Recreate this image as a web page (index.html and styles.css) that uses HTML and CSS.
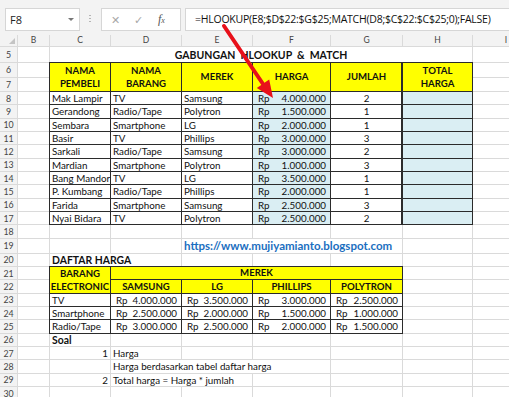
FILE: index.html
```html
<!DOCTYPE html>
<html lang="id">
<head>
    <meta charset="UTF-8">
    <title>Gabungan HLOOKUP &amp; MATCH</title>
    <link rel="stylesheet" href="styles.css">
</head>
<body>
<div class="app">

    <!-- formula bar -->
    <div class="formula-bar">
        <div class="name-box">F8<span class="caret"></span></div>
        <div class="grip"></div>
        <div class="fx-box">
            <span class="icon">&#x2715;</span>
            <span class="icon">&#x2713;</span>
            <span class="fx">f<small>x</small></span>
        </div>
        <div class="formula">=HLOOKUP(E8;$D$22:$G$25;MATCH(D8;$C$22:$C$25;0);FALSE)</div>
    </div>

    <!-- worksheet -->
    <div class="sheet">
        <div class="hd corner"></div><div class="hd">B</div><div class="hd">C</div><div class="hd">D</div><div class="hd">E</div><div class="hd">F</div><div class="hd">G</div><div class="hd">H</div><div class="hd">I</div>

        <div class="rn">5</div><div class="c"></div><div class="c title span6">GABUNGAN&nbsp; HLOOKUP&nbsp; &amp;&nbsp; MATCH</div><div class="c"></div>

        <div class="rn">6</div><div class="c"></div>
        <div class="c t y rows2">NAMA<br>PEMBELI</div>
        <div class="c t y rows2">NAMA<br>BARANG</div>
        <div class="c t y rows2">MEREK</div>
        <div class="c t y rows2">HARGA</div>
        <div class="c t y rows2">JUMLAH</div>
        <div class="c t y rows2 thick">TOTAL<br>HARGA</div>
        <div class="c"></div>
        <div class="rn">7</div><div class="c"></div><div class="c"></div>

        <div class="rn">8</div><div class="c"></div><div class="c t">Mak Lampir</div><div class="c t">TV</div><div class="c t">Samsung</div><div class="c t blue rp"><span>Rp</span><span>4.000.000</span></div><div class="c t mid">2</div><div class="c t blue thick"></div><div class="c"></div>
        <div class="rn">9</div><div class="c"></div><div class="c t">Gerandong</div><div class="c t">Radio/Tape</div><div class="c t">Polytron</div><div class="c t blue rp"><span>Rp</span><span>1.500.000</span></div><div class="c t mid">1</div><div class="c t blue thick"></div><div class="c"></div>
        <div class="rn">10</div><div class="c"></div><div class="c t">Sembara</div><div class="c t">Smartphone</div><div class="c t">LG</div><div class="c t blue rp"><span>Rp</span><span>2.000.000</span></div><div class="c t mid">1</div><div class="c t blue thick"></div><div class="c"></div>
        <div class="rn">11</div><div class="c"></div><div class="c t">Basir</div><div class="c t">TV</div><div class="c t">Phillips</div><div class="c t blue rp"><span>Rp</span><span>3.000.000</span></div><div class="c t mid">3</div><div class="c t blue thick"></div><div class="c"></div>
        <div class="rn">12</div><div class="c"></div><div class="c t">Sarkali</div><div class="c t">Radio/Tape</div><div class="c t">Samsung</div><div class="c t blue rp"><span>Rp</span><span>3.000.000</span></div><div class="c t mid">2</div><div class="c t blue thick"></div><div class="c"></div>
        <div class="rn">13</div><div class="c"></div><div class="c t">Mardian</div><div class="c t">Smartphone</div><div class="c t">Polytron</div><div class="c t blue rp"><span>Rp</span><span>1.000.000</span></div><div class="c t mid">3</div><div class="c t blue thick"></div><div class="c"></div>
        <div class="rn">14</div><div class="c"></div><div class="c t">Bang Mandor</div><div class="c t">TV</div><div class="c t">LG</div><div class="c t blue rp"><span>Rp</span><span>3.500.000</span></div><div class="c t mid">1</div><div class="c t blue thick"></div><div class="c"></div>
        <div class="rn">15</div><div class="c"></div><div class="c t">P. Kumbang</div><div class="c t">Radio/Tape</div><div class="c t">Phillips</div><div class="c t blue rp"><span>Rp</span><span>2.000.000</span></div><div class="c t mid">1</div><div class="c t blue thick"></div><div class="c"></div>
        <div class="rn">16</div><div class="c"></div><div class="c t">Farida</div><div class="c t">Smartphone</div><div class="c t">Samsung</div><div class="c t blue rp"><span>Rp</span><span>2.500.000</span></div><div class="c t mid">3</div><div class="c t blue thick"></div><div class="c"></div>
        <div class="rn">17</div><div class="c"></div><div class="c t">Nyai Bidara</div><div class="c t">TV</div><div class="c t">Polytron</div><div class="c t blue rp"><span>Rp</span><span>2.500.000</span></div><div class="c t mid">2</div><div class="c t blue thick"></div><div class="c"></div>

        <div class="rn">18</div><div class="c"></div><div class="c"></div><div class="c"></div><div class="c"></div><div class="c"></div><div class="c"></div><div class="c"></div><div class="c"></div>

        <div class="rn">19</div><div class="c"></div><div class="c"></div><div class="c"></div><div class="c link span3">https://www.mujiyamianto.blogspot.com</div><div class="c"></div><div class="c"></div>

        <div class="rn">20</div><div class="c"></div><div class="c bold span2">DAFTAR HARGA</div><div class="c"></div><div class="c"></div><div class="c"></div><div class="c"></div><div class="c"></div>

        <div class="rn">21</div><div class="c"></div>
        <div class="c t y rows2 tight">BARANG<br>ELECTRONIC</div>
        <div class="c t y span4">MEREK</div>
        <div class="c"></div><div class="c"></div>
        <div class="rn">22</div><div class="c"></div>
        <div class="c t y">SAMSUNG</div><div class="c t y">LG</div><div class="c t y">PHILLIPS</div><div class="c t y">POLYTRON</div>
        <div class="c"></div><div class="c"></div>

        <div class="rn">23</div><div class="c"></div><div class="c t">TV</div><div class="c t rp"><span>Rp</span><span>4.000.000</span></div><div class="c t rp"><span>Rp</span><span>3.500.000</span></div><div class="c t rp"><span>Rp</span><span>3.000.000</span></div><div class="c t rp"><span>Rp</span><span>2.500.000</span></div><div class="c"></div><div class="c"></div>
        <div class="rn">24</div><div class="c"></div><div class="c t">Smartphone</div><div class="c t rp"><span>Rp</span><span>2.500.000</span></div><div class="c t rp"><span>Rp</span><span>2.000.000</span></div><div class="c t rp"><span>Rp</span><span>1.500.000</span></div><div class="c t rp"><span>Rp</span><span>1.000.000</span></div><div class="c"></div><div class="c"></div>
        <div class="rn">25</div><div class="c"></div><div class="c t">Radio/Tape</div><div class="c t rp"><span>Rp</span><span>3.000.000</span></div><div class="c t rp"><span>Rp</span><span>2.500.000</span></div><div class="c t rp"><span>Rp</span><span>2.000.000</span></div><div class="c t rp"><span>Rp</span><span>1.500.000</span></div><div class="c"></div><div class="c"></div>

        <div class="rn">26</div><div class="c"></div><div class="c bold">Soal</div><div class="c"></div><div class="c"></div><div class="c"></div><div class="c"></div><div class="c"></div><div class="c"></div>
        <div class="rn">27</div><div class="c"></div><div class="c right">1</div><div class="c">Harga</div><div class="c"></div><div class="c"></div><div class="c"></div><div class="c"></div><div class="c"></div>
        <div class="rn">28</div><div class="c"></div><div class="c"></div><div class="c span3">Harga berdasarkan tabel daftar harga</div><div class="c"></div><div class="c"></div><div class="c"></div>
        <div class="rn">29</div><div class="c"></div><div class="c right">2</div><div class="c span2">Total harga = Harga * jumlah</div><div class="c"></div><div class="c"></div><div class="c"></div><div class="c"></div>
        <div class="rn">30</div><div class="c"></div><div class="c"></div><div class="c"></div><div class="c"></div><div class="c"></div><div class="c"></div><div class="c"></div><div class="c"></div>
    </div>

    <!-- red pointer drawn over the sheet -->
    <svg class="arrow" width="509" height="397" viewBox="0 0 509 397">
        <line x1="224" y1="26" x2="263" y2="84" stroke="#e8101a" stroke-width="4" stroke-linecap="round"/>
        <polygon points="273,98 256.8,88 269.2,79.6" fill="#e8101a"/>
    </svg>
</div>
</body>
</html>
```

FILE: styles.css
```css
html, body {
    margin: 0;
    height: 100%;
    overflow: hidden;
}

body {
    background-color: #ffffff;
    font-family: Lato, "Liberation Sans", sans-serif;
    color: #111111;
}

.app {
    position: relative;
    width: 509px;
    height: 397px;
    overflow: hidden;
}

/* ---------- formula bar ---------- */

.formula-bar {
    display: flex;
    align-items: stretch;
    height: 35px;
    padding: 8px 0 4px 5px;
    box-sizing: border-box;
    background-color: #f3f3f3;
    font-family: "Open Sans", "Noto Sans", sans-serif;
}

.name-box {
    position: relative;
    width: 75px;
    padding-left: 4px;
    box-sizing: border-box;
    background-color: #fff;
    border: 1px solid #d6d6d6;
    font-size: 11px;
    line-height: 21px;
    color: #222;
}

.caret {
    position: absolute;
    right: 5px;
    top: 9px;
    border-left: 3px solid transparent;
    border-right: 3px solid transparent;
    border-top: 3px solid #777;
}

.grip {
    width: 2px;
    height: 8px;
    margin: 6px 10px 0 9px;
    background: radial-gradient(circle, #b5b5b5 0.8px, transparent 1px) 0 0 / 2px 3px;
}

.fx-box {
    display: flex;
    align-items: center;
    width: 80px;
    padding-left: 9px;
    box-sizing: border-box;
    background-color: #fff;
    border: 1px solid #d6d6d6;
    gap: 14px;
}

.icon {
    font-size: 11px;
    color: #a8a8a8;
}

.fx {
    margin-left: 1px;
    font-family: "Liberation Serif", serif;
    font-style: italic;
    font-size: 12px;
    color: #555;
}

.fx small {
    font-size: 8px;
}

.formula {
    flex: 1;
    margin-left: 4px;
    padding-left: 9px;
    background-color: #fff;
    border: 1px solid #d6d6d6;
    border-right: none;
    font-size: 10.5px;
    letter-spacing: -0.25px;
    line-height: 21px;
    white-space: nowrap;
    color: #111;
}

/* ---------- sheet grid ---------- */

.sheet {
    display: grid;
    grid-template-columns: 17px 31px 60px 70px 70px 77px 71px 69px 66px;
    grid-template-rows: 11px 15px 13.5px 13.5px repeat(11, 12.333px) 14px repeat(11, 12.333px);
    gap: 1px;
    background-color: #dadada;
}

.hd {
    background-color: #f3f3f3;
    font-size: 8.5px;
    line-height: 11px;
    text-align: center;
    color: #444;
}

.corner {
    position: relative;
}

.corner::after {
    content: "";
    position: absolute;
    right: 2px;
    bottom: 2px;
    border-left: 6px solid transparent;
    border-bottom: 6px solid #c4c4c4;
}

.rn {
    background-color: #f3f3f3;
    font-size: 8.8px;
    display: flex;
    align-items: center;
    justify-content: center;
    color: #444;
}

.c {
    background-color: #fff;
    font-size: 9.8px;
    line-height: 12px;
    padding: 0 2px;
    white-space: nowrap;
    overflow: hidden;
    display: flex;
    align-items: center;
}

.t {
    outline: 1px solid #2b2b2b;
}

.thick {
    box-shadow: -2px 0 0 #2b2b2b;
}

.y {
    background-color: #ffff00;
    font-weight: bold;
    font-size: 9.6px;
    padding: 0;
    justify-content: center;
    text-align: center;
    line-height: 13.5px;
}

.tight {
    line-height: 13px;
}

.blue {
    background-color: #daeef3;
}

.rp {
    justify-content: space-between;
    padding: 0 4px 0 5px;
}

.mid {
    justify-content: center;
}

.right {
    justify-content: flex-end;
}

.bold {
    font-weight: bold;
    font-size: 10.4px;
}

.title {
    justify-content: center;
    font-weight: bold;
    font-size: 10.5px;
}

.link {
    font-weight: bold;
    font-size: 11.5px;
    color: #1a6ec0;
}

.span2 { grid-column: span 2; }
.span3 { grid-column: span 3; }
.span4 { grid-column: span 4; }
.span6 { grid-column: span 6; }
.rows2 { grid-row: span 2; }

/* ---------- overlay ---------- */

.arrow {
    position: absolute;
    left: 0;
    top: 0;
    pointer-events: none;
}
```
